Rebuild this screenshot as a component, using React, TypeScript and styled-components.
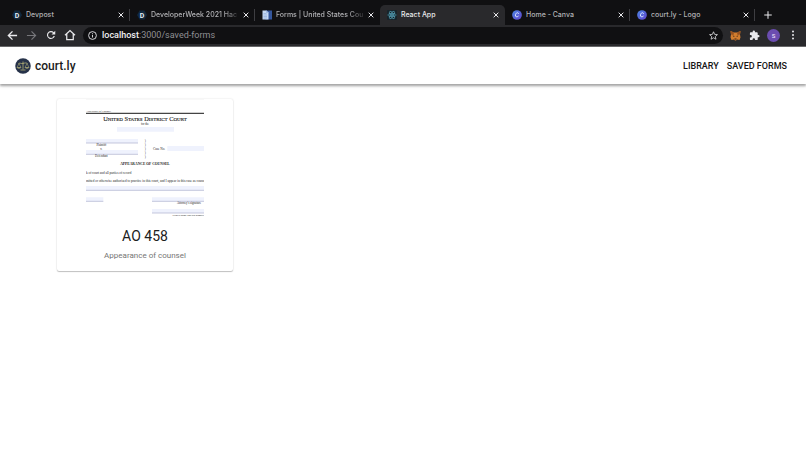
import React from "react";
import styled, { createGlobalStyle } from "styled-components";

const GlobalStyle = createGlobalStyle`
  *, *::before, *::after { box-sizing: border-box; }
  body { margin: 0; background: #fff; font-family: Roboto, "Liberation Sans", sans-serif; }
  button, input { font: inherit; }
`;

const Browser = styled.section`
  background: #101012;
`;

const TabStrip = styled.div`
  display: flex;
  align-items: flex-end;
  height: 25px;
  padding: 0 5px;
`;

const Tab = styled.div<{ $active?: boolean; $divided?: boolean }>`
  position: relative;
  display: flex;
  align-items: center;
  flex: 0 1 125px;
  min-width: 0;
  height: 20px;
  padding: 0 5px 0 7px;
  border-radius: 5px 5px 0 0;
  background: ${(p) => (p.$active ? "#29292c" : "transparent")};
  color: ${(p) => (p.$active ? "#e8e8ea" : "#b2b2b5")};

  &::after {
    content: "";
    position: absolute;
    right: 0;
    top: 4px;
    width: 1px;
    height: 12px;
    background: ${(p) => (p.$divided ? "#3e3e42" : "transparent")};
  }
`;

const TabButton = styled.button<{ $fade?: boolean }>`
  display: flex;
  align-items: center;
  gap: 4px;
  flex: 1;
  min-width: 0;
  height: 20px;
  padding: 0;
  border: 0;
  background: none;
  color: inherit;
  text-align: left;
  font-family: Inter, sans-serif;
  font-size: 7px;
  font-weight: 500;
  line-height: 20px;

  svg { flex: none; }
  span {
    flex: 1;
    overflow: hidden;
    white-space: nowrap;
    mask-image: ${(p) => (p.$fade ? "linear-gradient(90deg, #000 80%, transparent 100%)" : "none")};
  }
`;

const IconButton = styled.button<{ $w?: number; $dim?: boolean }>`
  display: flex;
  align-items: center;
  justify-content: center;
  flex: none;
  width: ${(p) => p.$w ?? 19}px;
  height: 20px;
  padding: 0;
  border: 0;
  background: none;
  color: ${(p) => (p.$dim ? "#77777b" : "#e9e9ec")};
`;

const Toolbar = styled.div`
  display: flex;
  align-items: center;
  height: 22px;
  padding: 0 4px 1px 3px;
  background: #29292c;
  border-bottom: 1px solid #68686a;
`;

const AddressBar = styled.div`
  display: flex;
  align-items: center;
  gap: 5px;
  flex: 1;
  min-width: 0;
  height: 17px;
  margin: 0 3px 0 4px;
  padding: 0 2px 0 5px;
  border-radius: 9px;
  background: #101012;
  color: #e9e9ec;
`;

const Address = styled.div`
  flex: 1;
  min-width: 0;
  overflow: hidden;
  color: #8f8f93;
  font-family: Roboto, sans-serif;
  font-size: 9px;
  line-height: 17px;
  white-space: nowrap;

  b { color: #f0f0f2; font-weight: 500; }
`;

const Avatar = styled.span`
  width: 13px;
  height: 13px;
  border-radius: 50%;
  background: #6b4db0;
  color: #e6dff5;
  font-size: 6px;
  font-weight: 500;
  line-height: 13px;
  text-align: center;
`;

const AppHeader = styled.header`
  display: flex;
  align-items: center;
  justify-content: space-between;
  height: 37px;
  padding: 0 19px 0 15px;
  background: #fff;
  box-shadow: 0 2px 2px rgba(0, 0, 0, 0.28), 0 2px 4px rgba(0, 0, 0, 0.12);
`;

const Brand = styled.a`
  display: flex;
  align-items: center;
  gap: 4px;
  color: #1b1b1b;
  font-size: 12px;
  font-weight: 500;
  line-height: 18px;
  text-decoration: none;
`;

const Nav = styled.nav`
  display: flex;
  gap: 8px;
`;

const NavLink = styled.a`
  color: #161616;
  font-size: 9px;
  font-weight: 500;
  line-height: 16px;
  text-decoration: none;
  text-transform: uppercase;
`;

const Main = styled.main`
  display: flex;
  flex-wrap: wrap;
  padding: 15px 57px;
`;

const FormCard = styled.article`
  display: flex;
  flex-direction: column;
  align-items: center;
  flex: 0 1 176px;
  padding-bottom: 7px;
  border-radius: 2px;
  background: #fff;
  box-shadow: 0 1px 1px rgba(0, 0, 0, 0.22), 0 0 2px rgba(0, 0, 0, 0.14);

  > svg { display: block; }
`;

const FormTitle = styled.h2`
  margin: 8px 0 0;
  color: #202020;
  font-size: 14px;
  font-weight: 400;
  line-height: 22px;
`;

const FormDescription = styled.p`
  margin: 0;
  color: #757575;
  font-size: 8px;
  line-height: 17px;
`;

const Stroke = ({ size, d, width = 2 }: { size: number; d: string; width?: number }) => (
  <svg width={size} height={size} viewBox="0 0 24 24" fill="none" stroke="currentColor" strokeWidth={width} aria-hidden>
    <path d={d} />
  </svg>
);

type Favicon = "devpost" | "forms" | "react" | "canva";

const TabIcon = ({ kind }: { kind: Favicon }) => {
  if (kind === "devpost")
    return (
      <svg width="10" height="10" viewBox="0 0 20 20" aria-hidden>
        <path d="M5 1h10l5 9-5 9H5l-5-9z" fill="#10283d" />
        <text x="10" y="15" textAnchor="middle" fontFamily="Roboto" fontWeight="700" fontSize="14" fill="#e4edf5">D</text>
      </svg>
    );
  if (kind === "forms")
    return (
      <svg width="10" height="10" viewBox="0 0 20 20" aria-hidden>
        <path d="M7 1h13v18H7z" fill="#34569c" />
        <path d="M1 1h8l4 4v14H1z" fill="#c5d8f3" />
        <path d="M9 1v4h4M3 7h6M3 10h7M3 13h7M3 16h7" stroke="#7f9fd0" fill="none" />
      </svg>
    );
  if (kind === "react")
    return (
      <svg width="10" height="10" viewBox="0 0 20 20" aria-hidden>
        <rect width="20" height="20" rx="2" fill="#17242b" />
        <g fill="none" stroke="#58a9c1" strokeWidth="1.2">
          <ellipse cx="10" cy="10" rx="8.5" ry="3.3" />
          <ellipse cx="10" cy="10" rx="8.5" ry="3.3" transform="rotate(60 10 10)" />
          <ellipse cx="10" cy="10" rx="8.5" ry="3.3" transform="rotate(120 10 10)" />
        </g>
        <circle cx="10" cy="10" r="1.8" fill="#58a9c1" />
      </svg>
    );
  return (
    <svg width="10" height="10" viewBox="0 0 20 20" aria-hidden>
      <defs>
        <linearGradient id="canva" x1="0" y1="0" x2="1" y2="1">
          <stop offset="0" stopColor="#4a86e4" />
          <stop offset="1" stopColor="#6244cc" />
        </linearGradient>
      </defs>
      <circle cx="10" cy="10" r="9.7" fill="url(#canva)" />
      <path d="M13 7c-.5-3-5-2-6 2.500s2.500 5.500 5.500 3" fill="none" stroke="#dce6ff" strokeWidth="2" strokeLinecap="round" />
    </svg>
  );
};

const ScalesLogo = () => (
  <svg width="16" height="16" viewBox="0 0 32 32" aria-hidden>
    <circle cx="16" cy="16" r="15.5" fill="#263249" />
    <g fill="none" stroke="#b9b77a" strokeWidth="1.5">
      <path d="M16 7v16M7 11c4-2 5 1 9 0s5-2 9 0M11 24h10" />
      <path d="M8 11l-4 8M8 11l4 8M24 11l-4 8M24 11l4 8" strokeWidth="1" />
    </g>
    <path d="M3.5 18.5h9c-1 3.500-8 3.500-9 0M19.500 18.500h9c-1 3.500-8 3.500-9 0" fill="#b9b77a" />
  </svg>
);

const Fox = () => (
  <svg width="11" height="11" viewBox="0 0 22 22" aria-hidden>
    <path d="M1 2l7 3h6l7-3-1 7 1 6-2 5-5-1-2 2h-2l-2-2-5 1-2-5 1-6z" fill="#d27d2e" />
    <path d="M1 2l7 3-1 5-5-1zM21 2l-7 3 1 5 5-1z" fill="#98521f" />
    <path d="M5 11l4 1-1 2zM17 11l-4 1 1 2zM9 17h4v2H9z" fill="#3a2519" />
  </svg>
);

const Puzzle = () => (
  <svg width="11" height="11" viewBox="0 0 24 24" fill="currentColor" aria-hidden>
    <path d="M20.5 11H19V7a2 2 0 0 0-2-2h-4V3.500a2.500 2.500 0 0 0-5 0V5H4a2 2 0 0 0-2 2v3.800h1.500a2.700 2.700 0 0 1 0 5.400H2V20a2 2 0 0 0 2 2h3.800v-1.500a2.700 2.700 0 0 1 5.400 0V22H17a2 2 0 0 0 2-2v-4h1.500a2.500 2.500 0 0 0 0-5z" />
  </svg>
);

const FormPreview = () => (
  <svg width="118" height="118" viewBox="0 0 354 354" role="img" aria-label="Appearance of Counsel form" fontFamily="Liberation Serif, serif" fill="#222">
    <path d="M0 1h354" stroke="#f1f1f1" strokeWidth="2" />
    <text x="0" y="38" fontSize="8">Appearance of Counsel</text>
    <path d="M0 43h354" stroke="#444" strokeWidth="4" />
    <text x="177" y="65" fontSize="19" fontWeight="500" textAnchor="middle" stroke="#222" strokeWidth=".4">
      U<tspan fontSize="15">NITED</tspan> S<tspan fontSize="15">TATES</tspan> D<tspan fontSize="15">ISTRICT</tspan> C<tspan fontSize="15">OURT</tspan>
    </text>
    <text x="177" y="79" fontSize="9" textAnchor="middle">for the</text>
    <path
      d="M93 84h171v14H93zM0 120h156v12H0zM0 153h156v12H0zM244 141h110v15H244zM0 261h354v13H0zM0 295h52v12H0zM198 295h156v12H198zM198 330h156v12H198z"
      fill="#eff2fd"
    />
    <path d="M0 132h156M0 166h156M0 274h354M0 307h52M198 307h156M198 342h156" stroke="#a9aecb" strokeWidth="2" />
    <g fontSize="9" textAnchor="middle">
      <text x="46" y="142">Plaintiff</text>
      <text x="46" y="153">v.</text>
      <text x="46" y="175">Defendant</text>
      <text x="178" y="130">)</text>
      <text x="178" y="142">)</text>
      <text x="178" y="154">)</text>
      <text x="178" y="165">)</text>
      <text x="178" y="176">)</text>
      <text x="309" y="316">Attorney's signature</text>
    </g>
    <text x="201" y="153" fontSize="10">Case No.</text>
    <text x="354" y="350" fontSize="8" textAnchor="end">Printed name and bar number</text>
    <text x="177" y="198" fontSize="11" fontWeight="700" textAnchor="middle">APPEARANCE OF COUNSEL</text>
    <text x="0" y="226" fontSize="10">k of court and all parties of record</text>
    <text x="0" y="249" fontSize="10">mitted or otherwise authorized to practice in this court, and I appear in this case as counse</text>
  </svg>
);

const tabs: { title: string; icon: Favicon; active?: boolean; divided?: boolean; fade?: boolean }[] = [
  { title: "Devpost", icon: "devpost", divided: true },
  { title: "DeveloperWeek 2021 Hac", icon: "devpost", divided: true, fade: true },
  { title: "Forms | United States Cou", icon: "forms", fade: true },
  { title: "React App", icon: "react", active: true },
  { title: "Home - Canva", icon: "canva", divided: true },
  { title: "court.ly - Logo", icon: "canva", divided: true },
];

export default function App() {
  return (
    <>
      <GlobalStyle />
      <Browser>
        <TabStrip>
          {tabs.map((tab) => (
            <Tab key={tab.title} $active={tab.active} $divided={tab.divided}>
              <TabButton $fade={tab.fade}>
                <TabIcon kind={tab.icon} />
                <span>{tab.title}</span>
              </TabButton>
              <IconButton $w={8} aria-label={`Close ${tab.title}`}>
                <Stroke size={8} width={3} d="M5 5l14 14M19 5L5 19" />
              </IconButton>
            </Tab>
          ))}
          <IconButton $w={26} aria-label="New tab">
            <Stroke size={10} width={2.5} d="M12 3v18M3 12h18" />
          </IconButton>
        </TabStrip>
        <Toolbar>
          <IconButton aria-label="Back"><Stroke size={11} width={3} d="M22 12H3M12 3l-9 9 9 9" /></IconButton>
          <IconButton $dim aria-label="Forward"><Stroke size={11} width={2.5} d="M2 12h19M12 3l9 9-9 9" /></IconButton>
          <IconButton aria-label="Reload">
            <svg width="12" height="12" viewBox="0 0 24 24" fill="currentColor" aria-hidden>
              <path d="M17.65 6.35A8 8 0 1 0 19.73 14h-2.500A5.700 5.700 0 1 1 12 6.300c1.600 0 3 .600 4 1.700L13 11h7.500V3.500z" />
            </svg>
          </IconButton>
          <IconButton aria-label="Home"><Stroke size={12} width={2.5} d="M2 12.5L12 3l10 9.500M5.500 10v11h13V10" /></IconButton>
          <AddressBar>
            <svg width="9" height="9" viewBox="0 0 18 18" fill="none" stroke="currentColor" strokeWidth="1.8" aria-hidden>
              <circle cx="9" cy="9" r="7.8" />
              <path d="M9 8v5M9 4.500v2" />
            </svg>
            <Address><b>localhost</b>:3000/saved-forms</Address>
            <IconButton $w={16} aria-label="Bookmark this page">
              <Stroke size={9} d="M12 2l3 7 7.500.700-5.700 5 1.800 7.300L12 18l-6.600 4 1.800-7.300-5.700-5L9 9z" />
            </IconButton>
          </AddressBar>
          <IconButton aria-label="Wallet"><Fox /></IconButton>
          <IconButton aria-label="Extensions"><Puzzle /></IconButton>
          <IconButton aria-label="Profile"><Avatar>S</Avatar></IconButton>
          <IconButton aria-label="Menu">
            <svg width="4" height="10" viewBox="0 0 4 10" fill="currentColor" aria-hidden>
              <circle cx="2" cy="1.5" r="1" /><circle cx="2" cy="5" r="1" /><circle cx="2" cy="8.5" r="1" />
            </svg>
          </IconButton>
        </Toolbar>
      </Browser>
      <AppHeader>
        <Brand href="#home"><ScalesLogo />court.ly</Brand>
        <Nav>
          <NavLink href="#library">Library</NavLink>
          <NavLink href="#saved-forms">Saved forms</NavLink>
        </Nav>
      </AppHeader>
      <Main>
        <FormCard>
          <FormPreview />
          <FormTitle>AO 458</FormTitle>
          <FormDescription>Appearance of counsel</FormDescription>
        </FormCard>
      </Main>
    </>
  );
}
